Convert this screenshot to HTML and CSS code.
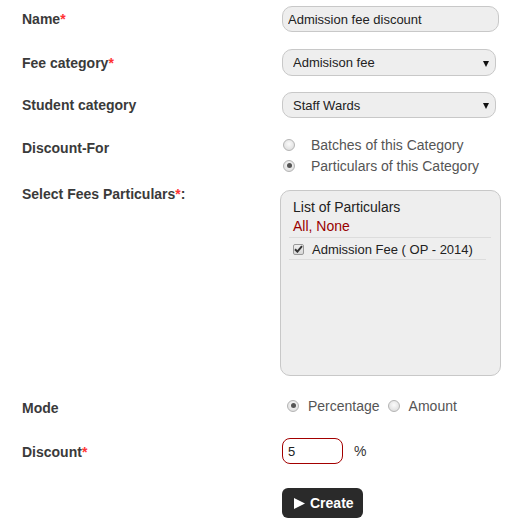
FILE: index.html
```html
<!DOCTYPE html>
<html>
<head>
<meta charset="utf-8">
<link rel="stylesheet" href="styles.css">
</head>
<body>
<form class="form">
  <div class="row row-name">
    <label class="label">Name<span class="req">*</span></label>
    <input class="text-input" type="text" value="Admission fee discount">
  </div>
  <div class="row row-fee">
    <label class="label">Fee category<span class="req">*</span></label>
    <span class="select-wrap"><select class="select"><option>Admisison fee</option></select></span>
  </div>
  <div class="row row-student">
    <label class="label">Student category</label>
    <span class="select-wrap"><select class="select"><option>Staff Wards</option></select></span>
  </div>
  <div class="row row-for">
    <label class="label">Discount-For</label>
    <div class="radio-list">
      <label class="radio-line"><input class="radio" type="radio" name="for"><span>Batches of this Category</span></label>
      <label class="radio-line"><input class="radio" type="radio" name="for" checked><span>Particulars of this Category</span></label>
    </div>
  </div>
  <div class="row row-particulars">
    <label class="label label-up">Select Fees Particulars<span class="req">*</span>:</label>
    <div class="particulars">
      <div class="part-title">List of Particulars</div>
      <div class="part-links">All, None</div>
      <div class="part-item">
        <span class="check"><svg width="9" height="8" viewBox="0 0 9 8"><path d="M1 4.2 L3.4 6.6 L8 1.2" fill="none" stroke="#333" stroke-width="2"/></svg></span>
        <span>Admission Fee ( OP - 2014)</span>
      </div>
    </div>
  </div>
  <div class="row row-mode">
    <label class="label">Mode</label>
    <div class="mode">
      <label class="mode-opt"><input class="radio" type="radio" name="mode" checked><span>Percentage</span></label>
      <label class="mode-opt"><input class="radio" type="radio" name="mode"><span>Amount</span></label>
    </div>
  </div>
  <div class="row row-discount">
    <label class="label">Discount<span class="req">*</span></label>
    <div class="discount">
      <input class="discount-input" type="text" value="5">
      <span class="pct">%</span>
    </div>
  </div>
  <div class="row row-submit">
    <span class="label"></span>
    <button type="button" class="btn"><svg class="btn-arrow" width="11" height="11" viewBox="0 0 11 11"><path d="M0 0 L11 5.5 L0 11 Z" fill="#fff"/></svg>Create</button>
  </div>
</form>
</body>
</html>
```
FILE: styles.css
```css
html, body {
  margin: 0;
  padding: 0;
  background: #fff;
}
body {
  font-family: "Liberation Sans", Arial, sans-serif;
  font-size: 14px;
  color: #333;
}
.form {
  padding: 6px 0 0 22px;
  display: flex;
  flex-direction: column;
}
.row {
  display: flex;
  align-items: flex-start;
}
.label {
  width: 260px;
  flex: none;
  font-weight: bold;
  font-size: 14px;
  line-height: 20px;
  color: #3a3a3a;
  padding-top: 3px;
}
.req {
  color: #f33;
}
.row-name { margin-bottom: 17px; }
.row-fee { margin-bottom: 16px; }
.row-fee .label { padding-top: 4px; }
.row-student { margin-bottom: 16px; }
.row-for { margin-bottom: 14px; }
.row-for .label { padding-top: 4px; }
.row-particulars { margin-bottom: 19px; }
.row-particulars .label { padding-top: 0; margin-top: -6px; }
.row-mode { margin-bottom: 20px; }
.row-mode .label { padding-top: 3px; }
.row-discount { margin-bottom: 24px; }
.row-discount .label { padding-top: 4px; }

.text-input {
  box-sizing: border-box;
  width: 217px;
  height: 26px;
  margin: 0;
  padding: 0 5px;
  border: 1px solid #c8c8c8;
  border-radius: 10px;
  background: #eee;
  font-family: inherit;
  font-size: 13px;
  color: #222;
  outline: none;
}
.select-wrap {
  position: relative;
  display: block;
}
.select {
  box-sizing: border-box;
  width: 214px;
  height: 27px;
  margin: 0;
  padding: 0 10px;
  border: 1px solid #c8c8c8;
  border-radius: 10px;
  background: #eee;
  font-family: inherit;
  font-size: 13px;
  color: #222;
  appearance: none;
  -webkit-appearance: none;
  outline: none;
}
.row-student .select { height: 26px; }
.select-wrap::after {
  content: "";
  position: absolute;
  right: 7px;
  top: 50%;
  margin-top: -2px;
  border-left: 3px solid transparent;
  border-right: 3px solid transparent;
  border-top: 6px solid #111;
}
.radio {
  appearance: none;
  -webkit-appearance: none;
  box-sizing: border-box;
  width: 12px;
  height: 12px;
  margin: 0;
  border: 1px solid #b4b4b4;
  border-radius: 50%;
  background: radial-gradient(circle at 50% 40%, #fbfbfb 0%, #e2e2e2 70%, #d4d4d4 100%);
  flex: none;
  position: relative;
}
.radio:checked::after {
  content: "";
  position: absolute;
  left: 2.5px;
  top: 2.5px;
  width: 5px;
  height: 5px;
  border-radius: 50%;
  background: #555;
}
.radio-list {
  display: flex;
  flex-direction: column;
  margin-left: 1px;
}
.radio-line {
  display: flex;
  align-items: center;
  gap: 16px;
  height: 21px;
  color: #555;
  font-size: 14px;
}
.particulars {
  box-sizing: border-box;
  width: 221px;
  height: 186px;
  margin-left: -2px;
  padding: 7px 9px 0 8px;
  border: 1px solid #c8c8c8;
  border-radius: 10px;
  background: #eee;
  color: #222;
}
.part-title {
  padding-left: 4px;
  line-height: 18px;
  font-size: 14px;
}
.part-links {
  padding-left: 4px;
  line-height: 21px;
  font-size: 14px;
  color: #990000;
  border-bottom: 1px solid #dcdcdc;
  margin-bottom: 1px;
}
.part-item {
  display: flex;
  align-items: center;
  gap: 8px;
  height: 20px;
  padding-left: 4px;
  margin-right: 5px;
  border-bottom: 1px solid #dcdcdc;
  font-size: 13px;
}
.check {
  box-sizing: border-box;
  width: 11px;
  height: 11px;
  border: 1px solid #999;
  border-radius: 2px;
  background: linear-gradient(#f0f0f0, #d8d8d8);
  display: flex;
  align-items: center;
  justify-content: center;
}
.mode {
  display: flex;
  align-items: center;
  height: 21px;
  margin-left: 5px;
  gap: 8px;
}
.mode-opt {
  display: flex;
  align-items: center;
  gap: 9px;
  color: #555;
  font-size: 14px;
}
.discount {
  display: flex;
  align-items: center;
  gap: 11px;
}
.discount-input {
  box-sizing: border-box;
  width: 61px;
  height: 26px;
  margin: 0;
  padding: 0 5px;
  border: 1px solid #a30000;
  border-radius: 8px;
  background: #fff;
  font-family: inherit;
  font-size: 13px;
  color: #222;
  outline: none;
}
.pct {
  font-size: 14px;
  color: #333;
}
.btn {
  box-sizing: border-box;
  display: flex;
  align-items: center;
  gap: 5px;
  height: 30px;
  margin: 0;
  padding: 0 9px 0 12px;
  border: none;
  border-radius: 6px;
  background: #2a2a2a;
  color: #fff;
  font-family: inherit;
  font-weight: bold;
  font-size: 14px;
}
.btn-arrow {
  flex: none;
}
```
